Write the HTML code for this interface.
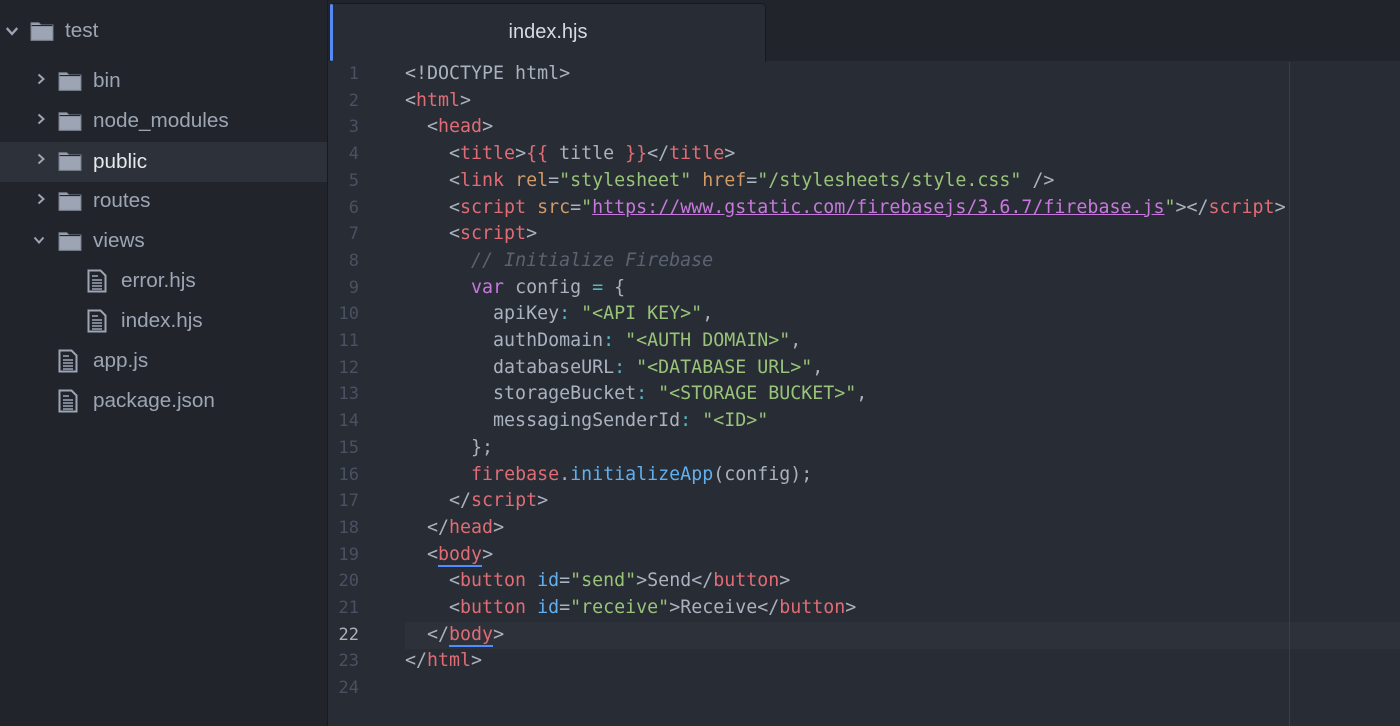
<!DOCTYPE html>
<html><head><style>
*{margin:0;padding:0;box-sizing:border-box}
body{width:1400px;height:726px;background:#282c34;overflow:hidden;position:relative;font-family:"Liberation Sans",sans-serif}
#side{position:absolute;left:0;top:0;width:328px;height:726px;background:#21252b;border-right:1px solid #181a1f}
.row{position:absolute;left:0;width:327px;height:40px;color:#9da5b4;font-size:20.7px;line-height:40px}
.row span{position:absolute}
.row svg{position:absolute}
.sel{background:#2c313a;color:#e6e8ec}
#tabbar{position:absolute;left:328px;top:0;width:1072px;height:61px;background:#21252b}
#tab{position:absolute;left:330px;top:3px;width:436px;height:59px;background:#282c34;border-radius:4px 4px 0 0;border:1px solid #181a1f;border-bottom:none;color:#d7dae0;font-size:20px;text-align:center;line-height:56px}
#tab:before{content:"";position:absolute;left:-1px;top:0;width:3px;height:57px;background:#568af2;border-radius:2px}
.ln{position:absolute;left:330px;width:29px;text-align:right;color:#495162;font-family:"DejaVu Sans Mono",monospace;font-size:17px}
.cl{position:absolute;left:405px;white-space:pre;color:#abb2bf;font-family:"DejaVu Sans Mono","Liberation Mono",monospace;font-size:18.3px}
.t{color:#e06c75}.a{color:#d19a66}.s{color:#98c379}.k{color:#c678dd}.c{color:#5c6370;font-style:italic}.f{color:#61afef}.p{color:#56b6c2}
.u{color:#c678dd;text-decoration:underline}
.m{border-bottom:2px solid #528bff}
</style></head><body>
<div id="side">
<svg width="0" height="0" style="position:absolute"><defs>
<symbol id="fold" viewBox="0 0 22 20"><path d="M1 2.5h7l2 2h11v14H1z" fill="#9da5b4" stroke="#7f8694" stroke-width="1"/><path d="M1.5 5h19" stroke="#21252b" stroke-width="1"/></symbol>
<symbol id="file" viewBox="0 0 20 24"><path d="M1.5 1.5h12l5 5v16h-17z" fill="none" stroke="#9da5b4" stroke-width="2"/><path d="M5 7h6M5 11h10M5 14h10M5 17h10M5 20h10" stroke="#9da5b4" stroke-width="1.6"/></symbol>
<symbol id="cr" viewBox="0 0 12 12"><path d="M3.5 1.5l5 4.5-5 4.5" fill="none" stroke="#9da5b4" stroke-width="2"/></symbol>
<symbol id="cd" viewBox="0 0 12 12"><path d="M1.5 3.5l4.5 5 4.5-5" fill="none" stroke="#9da5b4" stroke-width="2"/></symbol>
</defs></svg>
<div class="row" style="top:11px"><svg style="left:5px;top:13px" width="14" height="14"><use href="#cd"/></svg><svg style="left:30px;top:9px" width="24" height="22"><use href="#fold"/></svg><span style="left:65px">test</span></div>
<div class="row" style="top:61px"><svg style="left:35px;top:12px" width="12" height="12"><use href="#cr"/></svg><svg style="left:58px;top:9px" width="24" height="22"><use href="#fold"/></svg><span style="left:93px">bin</span></div>
<div class="row" style="top:101px"><svg style="left:35px;top:12px" width="12" height="12"><use href="#cr"/></svg><svg style="left:58px;top:9px" width="24" height="22"><use href="#fold"/></svg><span style="left:93px">node_modules</span></div>
<div class="row sel" style="top:142px"><svg style="left:35px;top:11px" width="12" height="12"><use href="#cr"/></svg><svg style="left:58px;top:8px" width="24" height="22"><use href="#fold"/></svg><span style="left:93px">public</span></div>
<div class="row" style="top:181px"><svg style="left:35px;top:12px" width="12" height="12"><use href="#cr"/></svg><svg style="left:58px;top:9px" width="24" height="22"><use href="#fold"/></svg><span style="left:93px">routes</span></div>
<div class="row" style="top:221px"><svg style="left:33px;top:13px" width="12" height="12"><use href="#cd"/></svg><svg style="left:58px;top:9px" width="24" height="22"><use href="#fold"/></svg><span style="left:93px">views</span></div>
<div class="row" style="top:261px"><svg style="left:87px;top:8px" width="20" height="24"><use href="#file"/></svg><span style="left:121px">error.hjs</span></div>
<div class="row" style="top:301px"><svg style="left:87px;top:8px" width="20" height="24"><use href="#file"/></svg><span style="left:121px">index.hjs</span></div>
<div class="row" style="top:341px"><svg style="left:58px;top:8px" width="20" height="24"><use href="#file"/></svg><span style="left:93px">app.js</span></div>
<div class="row" style="top:381px"><svg style="left:58px;top:8px" width="20" height="24"><use href="#file"/></svg><span style="left:93px">package.json</span></div>
</div>
<div id="tabbar"></div>
<div id="tab">index.hjs</div>
<div style="position:absolute;left:405px;top:622px;width:995px;height:27px;background:#2c313a"></div>
<div style="position:absolute;left:1289px;top:62px;width:1px;height:664px;background:#3b4048"></div>
<div id="code"></div>
<script>
var L=[
'&lt;!DOCTYPE html&gt;',
'&lt;<span class="t">html</span>&gt;',
'  &lt;<span class="t">head</span>&gt;',
'    &lt;<span class="t">title</span>&gt;<span class="t">{{</span> title <span class="t">}}</span>&lt;/<span class="t">title</span>&gt;',
'    &lt;<span class="t">link</span> <span class="a">rel</span>=<span class="s">"stylesheet"</span> <span class="a">href</span>=<span class="s">"/stylesheets/style.css"</span> /&gt;',
'    &lt;<span class="t">script</span> <span class="a">src</span>=<span class="s">"</span><span class="u">https://www.gstatic.com/firebasejs/3.6.7/firebase.js</span><span class="s">"</span>&gt;&lt;/<span class="t">script</span>&gt;',
'    &lt;<span class="t">script</span>&gt;',
'      <span class="c">// Initialize Firebase</span>',
'      <span class="k">var</span> config <span class="p">=</span> {',
'        apiKey<span class="p">:</span> <span class="s">"&lt;API KEY&gt;"</span>,',
'        authDomain<span class="p">:</span> <span class="s">"&lt;AUTH DOMAIN&gt;"</span>,',
'        databaseURL<span class="p">:</span> <span class="s">"&lt;DATABASE URL&gt;"</span>,',
'        storageBucket<span class="p">:</span> <span class="s">"&lt;STORAGE BUCKET&gt;"</span>,',
'        messagingSenderId<span class="p">:</span> <span class="s">"&lt;ID&gt;"</span>',
'      };',
'      <span class="t">firebase</span>.<span class="f">initializeApp</span>(config);',
'    &lt;/<span class="t">script</span>&gt;',
'  &lt;/<span class="t">head</span>&gt;',
'  &lt;<span class="t m">body</span>&gt;',
'    &lt;<span class="t">button</span> <span class="f">id</span>=<span class="s">"send"</span>&gt;Send&lt;/<span class="t">button</span>&gt;',
'    &lt;<span class="t">button</span> <span class="f">id</span>=<span class="s">"receive"</span>&gt;Receive&lt;/<span class="t">button</span>&gt;',
'  &lt;/<span class="t m">body</span>&gt;',
'&lt;/<span class="t">html</span>&gt;',
''];
var h='';
for(var i=0;i<24;i++){var y=63+i*26.7;
h+='<div class="ln" style="top:'+(y+1)+'px;'+(i==21?'color:#abb2bf':'')+'">'+(i+1)+'</div>';
h+='<div class="cl" style="top:'+y+'px">'+L[i]+'</div>';}
document.getElementById('code').innerHTML=h;
</script>
</body></html>
